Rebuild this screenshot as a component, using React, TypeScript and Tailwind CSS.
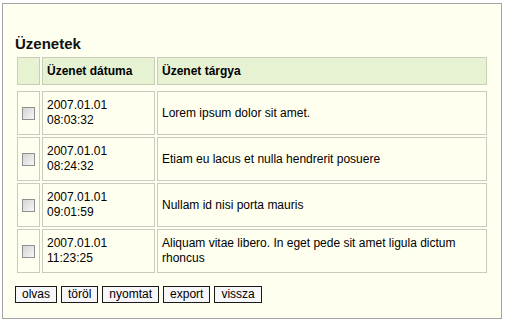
import React from "react";

const messages = [
  { date: "2007.01.01", time: "08:03:32", subject: "Lorem ipsum dolor sit amet." },
  { date: "2007.01.01", time: "08:24:32", subject: "Etiam eu lacus et nulla hendrerit posuere" },
  { date: "2007.01.01", time: "09:01:59", subject: "Nullam id nisi porta mauris" },
  {
    date: "2007.01.01",
    time: "11:23:25",
    subject: "Aliquam vitae libero. In eget pede sit amet ligula dictum rhoncus",
  },
];

const buttons = ["olvas", "töröl", "nyomtat", "export", "vissza"];

function Checkbox() {
  return (
    <div className="w-[13px] h-[13px] border border-[#8f9090] bg-gradient-to-br from-[#d4d4d4] to-[#f7f7f7]" />
  );
}

export default function App() {
  return (
    <div className="w-[506px] h-[321px] bg-white pl-[2px] pt-[3px] font-['Liberation_Sans',Arial,sans-serif] text-black">
      <div className="w-[500px] h-[316px] border border-[#a4a4a4] bg-[#fffff0] pl-[12px] pt-[31px]">
        <h1 className="text-[15px] leading-[18px] font-bold mb-[4px] text-[#111]">Üzenetek</h1>

        {/* header */}
        <div className="ml-[2px] grid grid-cols-[23px_113px_330px] gap-x-[2px] mb-[6px] text-[12px] leading-[15px] font-bold">
          <div className="h-[28px] border border-[#c6cdb8] bg-[#e6f2d2]" />
          <div className="h-[28px] border border-[#c6cdb8] bg-[#e6f2d2] flex items-center pl-[4px]">
            Üzenet dátuma
          </div>
          <div className="h-[28px] border border-[#c6cdb8] bg-[#e6f2d2] flex items-center pl-[4px]">
            Üzenet tárgya
          </div>
        </div>

        {/* rows */}
        <div className="ml-[2px] grid grid-cols-[23px_113px_330px] gap-x-[2px] gap-y-[2px] text-[12px] leading-[15px]">
          {messages.map((m, i) => (
            <React.Fragment key={i}>
              <div className="h-[44px] border border-[#cacac0] flex items-center justify-center">
                <Checkbox />
              </div>
              <div className="h-[44px] border border-[#cacac0] flex flex-col justify-center pl-[4px]">
                <span>{m.date}</span>
                <span>{m.time}</span>
              </div>
              <div className="h-[44px] border border-[#cacac0] flex items-center pl-[4px] pr-[4px]">
                <span>{m.subject}</span>
              </div>
            </React.Fragment>
          ))}
        </div>

        <div className="flex gap-[4px] mt-[13px] text-[12px] leading-[15px]">
          {buttons.map((b) => (
            <button
              key={b}
              className="border border-[#1a1a1a] bg-[#f7f7fa] px-[6px] h-[17px] leading-[15px] text-black"
            >
              {b}
            </button>
          ))}
        </div>
      </div>
    </div>
  );
}
